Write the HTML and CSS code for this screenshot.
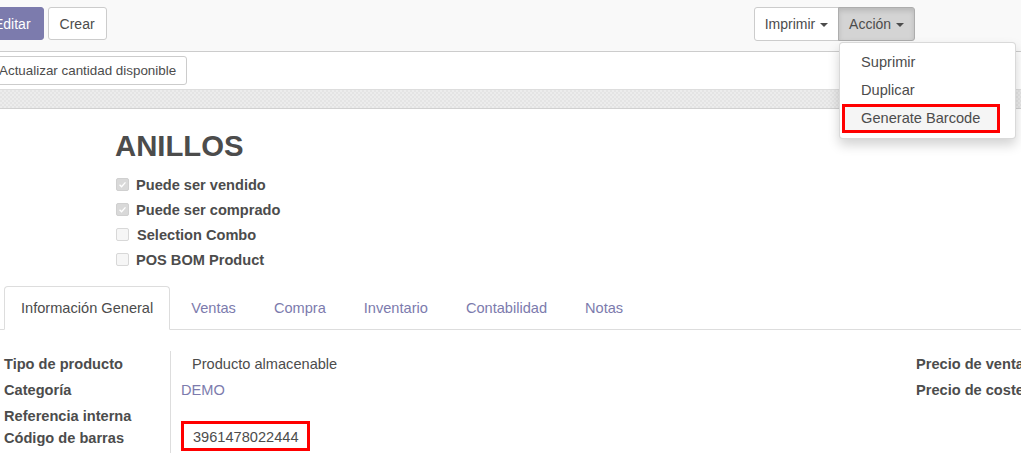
FILE: index.html
```html
<!DOCTYPE html>
<html>
<head>
<meta charset="utf-8">
<link rel="stylesheet" href="styles.css">
</head>
<body>
<div class="control-panel">
  <div class="left-btns">
    <button class="btn btn-primary edit">Editar</button>
    <button class="btn create">Crear</button>
  </div>
  <div class="right-btns">
    <div class="btn-group">
      <button class="btn grp-first">Imprimir <span class="caret"></span></button>
      <div class="dd-wrap">
        <button class="btn grp-last active">Acción <span class="caret"></span></button>
        <ul class="dropdown">
          <li>Suprimir</li>
          <li>Duplicar</li>
          <li class="marked">Generate Barcode</li>
        </ul>
      </div>
    </div>
  </div>
</div>
<div class="header-bar">
  <button class="btn small update">Actualizar cantidad disponible</button>
</div>
<div class="stripes"></div>
<div class="sheet">
  <div class="title-block">
    <h1>ANILLOS</h1>
    <div class="checks">
      <label class="check"><span class="box checked">
        <svg viewBox="0 0 13 13" width="13" height="13"><path d="M3 6.8 L5.4 9.2 L10 4" fill="none" stroke="#fff" stroke-width="1.6"/></svg>
      </span>Puede ser vendido</label>
      <label class="check"><span class="box checked">
        <svg viewBox="0 0 13 13" width="13" height="13"><path d="M3 6.8 L5.4 9.2 L10 4" fill="none" stroke="#fff" stroke-width="1.6"/></svg>
      </span>Puede ser comprado</label>
      <label class="check"><span class="box"></span><span class="shift">Selection Combo</span></label>
      <label class="check"><span class="box"></span>POS BOM Product</label>
    </div>
  </div>
  <ul class="tabs">
    <li class="tab active">Información General</li>
    <li class="tab">Ventas</li>
    <li class="tab">Compra</li>
    <li class="tab">Inventario</li>
    <li class="tab">Contabilidad</li>
    <li class="tab">Notas</li>
  </ul>
  <div class="fields">
    <div class="group-left">
      <div class="labels">
        <div class="lbl">Tipo de producto</div>
        <div class="lbl">Categoría</div>
        <div class="lbl short">Referencia interna</div>
        <div class="lbl">Código de barras</div>
      </div>
      <div class="values">
        <div class="val indent">Producto almacenable</div>
        <div class="val link">DEMO</div>
        <div class="val empty"></div>
        <div class="val barcode">3961478022444</div>
      </div>
    </div>
    <div class="group-right">
      <div class="lbl">Precio de venta</div>
      <div class="lbl">Precio de coste</div>
    </div>
  </div>
</div>
</body>
</html>
```
FILE: styles.css
```css
* { box-sizing: border-box; }
html, body { margin: 0; padding: 0; }
body {
  width: 1021px;
  height: 466px;
  overflow: hidden;
  font-family: "Liberation Sans", Arial, sans-serif;
  font-size: 14.6px;
  color: #4c4c4c;
  background: #fff;
}
.btn {
  font-family: inherit;
  font-size: 14px;
  line-height: 20px;
  color: #4c4c4c;
  background: #fff;
  border: 1px solid #ccc;
  border-radius: 3px;
  padding: 6px 12px;
  cursor: pointer;
}
.control-panel {
  height: 52px;
  background: #f9f9f9;
  border-bottom: 1px solid #ccc;
  display: flex;
  justify-content: space-between;
  align-items: flex-start;
  padding-top: 7px;
}
.left-btns { display: flex; gap: 4px; margin-left: -19px; }
.btn-primary {
  background: #7c7bad;
  border-color: #7c7bad;
  color: #fff;
}
.edit { height: 33px; }
.create { height: 33px; padding: 6px 11px; }
.right-btns { margin-right: 106px; }
.btn-group { display: flex; }
.grp-first { border-radius: 3px 0 0 3px; height: 34px; padding: 6px 10px; }
.grp-last { border-radius: 0 3px 3px 0; margin-left: -1px; height: 34px; padding: 6px 10px; }
.btn.active {
  background: #d4d4d4;
  border-color: #adadad;
  box-shadow: inset 0 3px 5px rgba(0,0,0,0.125);
}
.caret {
  display: inline-block;
  width: 0; height: 0;
  margin-left: 1px;
  vertical-align: middle;
  border-top: 4px solid #4c4c4c;
  border-left: 4px solid transparent;
  border-right: 4px solid transparent;
}
.dd-wrap { position: relative; }
.dropdown {
  position: absolute;
  top: 35px;
  left: 0;
  width: 177px;
  margin: 0;
  padding: 5px 0;
  list-style: none;
  background: #fff;
  border: 1px solid rgba(0,0,0,0.15);
  border-radius: 4px;
  box-shadow: 0 6px 12px rgba(0,0,0,0.175);
  z-index: 10;
  font-size: 14.6px;
}
.dropdown li {
  padding: 4px 21px;
  line-height: 20px;
  color: #4c4c4c;
  white-space: nowrap;
}
.dropdown li.marked {
  margin: 0 15px 0 2px;
  padding: 1px 16px 2px 16px;
  border: 3px solid #ff0000;
  background: #f5f5f5;
}
.header-bar {
  height: 37px;
  background: #fff;
  display: flex;
  align-items: center;
}
.btn.small {
  font-size: 13.4px;
  padding: 4px 10px;
  height: 29px;
  line-height: 19px;
}
.update { margin-left: -12px; }
.stripes {
  height: 20px;
  border-top: 1px solid #ddd;
  border-bottom: 1px solid #d0d0d0;
  background-color: #ececec;
  background-image:
    linear-gradient(45deg, #e4e4e4 25%, transparent 25%, transparent 75%, #e4e4e4 75%),
    linear-gradient(45deg, #e4e4e4 25%, transparent 25%, transparent 75%, #e4e4e4 75%);
  background-size: 4px 4px;
  background-position: 0 0, 2px 2px;
}
.sheet { background: #fff; }
.title-block { padding: 17px 0 0 116px; }
h1 {
  margin: 0 0 6px -1px;
  font-size: 29.3px;
  line-height: 40px;
  font-weight: bold;
  color: #4c4c4c;
}
.checks { display: flex; flex-direction: column; }
.check {
  display: flex;
  align-items: center;
  height: 25px;
  font-weight: bold;
  color: #4c4c4c;
}
.box {
  width: 13px; height: 13px;
  border: 1px solid #d8d8d8;
  border-radius: 2px;
  background: #f6f6f6;
  margin-right: 7px;
  display: inline-flex;
  align-items: center;
  justify-content: center;
}
.box svg { display: block; }
.box.checked { background: #d9d9d9; border-color: #d0d0d0; }
.shift { margin-left: 1px; }
.tabs {
  display: flex;
  list-style: none;
  margin: 14px 0 0 0;
  padding: 0 0 0 4px;
  border-bottom: 1px solid #ddd;
  height: 44px;
}
.tab {
  padding: 0 16px 0 18px;
  line-height: 42px;
  color: #7c7bad;
  border: 1px solid transparent;
  border-radius: 4px 4px 0 0;
  margin-right: 2px;
  white-space: nowrap;
}
.tab.active {
  color: #4c4c4c;
  background: #fff;
  border-color: #ddd;
  border-bottom-color: #fff;
  height: 44px;
  padding: 0 16px;
}
.fields {
  display: flex;
  justify-content: space-between;
  padding: 21px 0 0 4px;
}
.group-left { display: flex; }
.labels { width: 167px; border-right: 1px solid #ddd; padding-bottom: 2px; }
.lbl { font-weight: bold; color: #4c4c4c; line-height: 26px; height: 26px; white-space: nowrap; }
.lbl.short { height: 22px; line-height: 26px; }
.values { padding-left: 10px; }
.val { height: 26px; line-height: 26px; white-space: nowrap; }
.val.indent { padding-left: 11px; }
.val.link { color: #7c7bad; }
.val.empty { height: 18px; }
.val.barcode {
  width: 129px;
  height: 30px;
  border: 3px solid #ff0000;
  line-height: 22px;
  padding: 2px 0 0 9px;
}
.group-right { width: 105px; overflow: hidden; }
```
